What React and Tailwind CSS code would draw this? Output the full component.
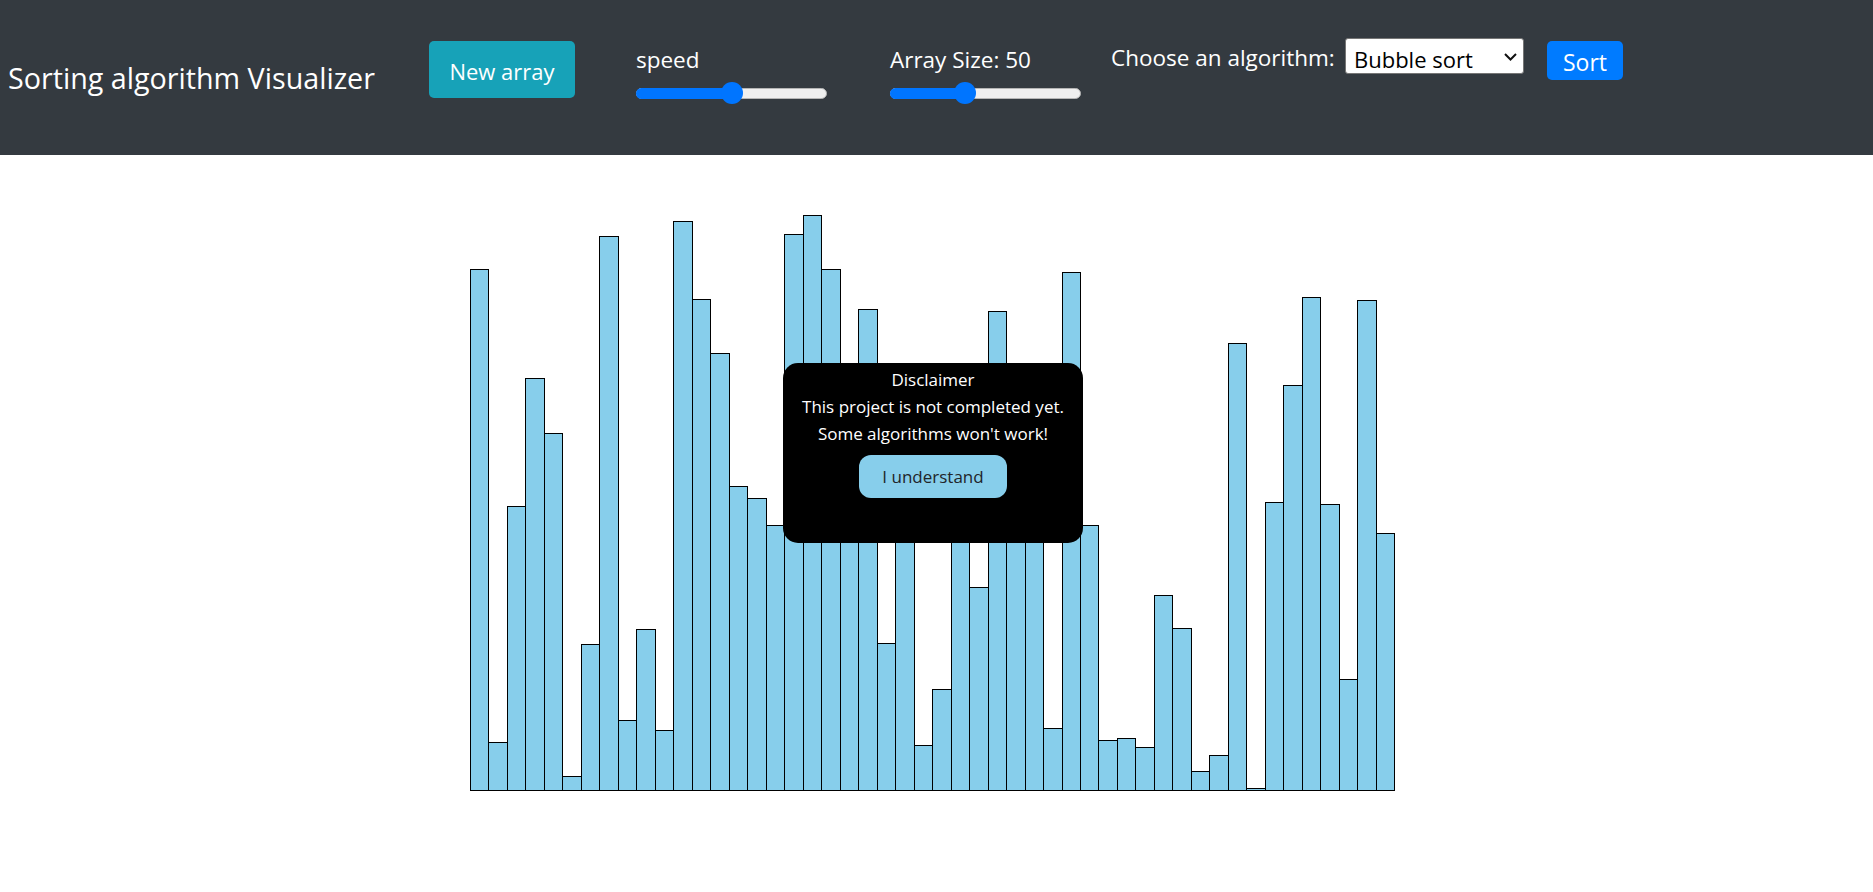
import React from "react";

const BAR_HEIGHTS = [
  522, 49, 285, 413, 358, 15, 147, 555, 71, 162,
  61, 570, 492, 438, 305, 293, 266, 557, 576, 522,
  341, 482, 148, 271, 46, 102, 391, 204, 480, 321,
  361, 63, 519, 266, 51, 53, 44, 196, 163, 20,
  36, 448, 3, 289, 406, 494, 287, 112, 491, 258,
];

function Slider({ thumbLeft }) {
  return (
    <div className="relative w-[191px] h-[22px] flex items-center">
      <div className="w-full h-[11px] rounded-full bg-[#efefef] border border-[#b5b5b5]" />
      <div
        className="absolute left-0 top-[5.5px] h-[11px] rounded-full bg-[#0075ff]"
        style={{ width: thumbLeft + 11 }}
      />
      <div
        className="absolute top-0 w-[22px] h-[22px] rounded-full bg-[#0075ff]"
        style={{ left: thumbLeft }}
      />
    </div>
  );
}

export default function App() {
  return (
    <div
      className="relative min-h-screen bg-white"
      style={{ fontFamily: '"Open Sans", "Noto Sans", sans-serif' }}
    >
      <nav className="h-[155px] bg-[#343a40] flex items-start text-white">
        <div className="w-[429px] pl-[8px] mt-[58px] text-[28.7px] leading-[40px] whitespace-nowrap">
          Sorting algorithm Visualizer
        </div>
        <button className="mt-[41px] w-[146px] h-[57px] rounded-[5px] bg-[#17a2b8] text-white text-[22px] pt-[4px] leading-[53px] whitespace-nowrap">
          New array
        </button>
        <div className="ml-[61px] mt-[45px] w-[191px] flex flex-col">
          <div className="text-[22.5px] leading-[30px] whitespace-nowrap">speed</div>
          <div className="mt-[7px]">
            <Slider thumbLeft={85} />
          </div>
        </div>
        <div className="ml-[63px] mt-[45px] w-[191px] flex flex-col">
          <div className="text-[22.5px] leading-[30px] whitespace-nowrap">Array Size: 50</div>
          <div className="mt-[7px]">
            <Slider thumbLeft={64} />
          </div>
        </div>
        <div className="ml-[30px] flex items-start">
          <div className="w-[234px] mt-[43px] text-[22.5px] leading-[30px] whitespace-nowrap">
            Choose an algorithm:
          </div>
          <div className="relative mt-[38px] w-[179px] h-[36px]">
            <select
              defaultValue="bubble"
              className="appearance-none w-full h-full bg-white text-black border border-[#767676] rounded-[3px] pl-[8px] pt-[4px] text-[22px] outline-none"
              style={{ fontFamily: '"Open Sans", "Noto Sans", sans-serif' }}
            >
              <option value="bubble">Bubble sort</option>
              <option value="selection">Selection sort</option>
              <option value="insertion">Insertion sort</option>
              <option value="merge">Merge sort</option>
              <option value="quick">Quick sort</option>
            </select>
            <svg
              className="absolute right-[7px] top-[15px] pointer-events-none"
              width="13"
              height="8"
              viewBox="0 0 13 8"
              fill="none"
            >
              <path d="M1 1L6.5 6.5L12 1" stroke="#111" strokeWidth="2" />
            </svg>
          </div>
          <button className="ml-[23px] mt-[41px] w-[76px] h-[39px] rounded-[5px] bg-[#007bff] text-white text-[23px] pt-[3px] leading-[36px]">
            Sort
          </button>
        </div>
      </nav>

      <div className="h-[636px] pl-[470px] flex items-end">
        <div className="w-[925px] h-full flex items-end">
          {BAR_HEIGHTS.map((h, i) => (
            <div
              key={i}
              className="flex-1 -ml-px first:ml-0 border border-black bg-[#87ceeb]"
              style={{ height: h }}
            />
          ))}
        </div>
      </div>

      <div className="absolute left-[783px] top-[363px] w-[300px] h-[180px] bg-black rounded-[15px] text-white text-center text-[17px] leading-[27px] pt-[3px] flex flex-col items-center">
        <div>Disclaimer</div>
        <div>This project is not completed yet.</div>
        <div>Some algorithms won't work!</div>
        <button className="mt-[8px] w-[148px] h-[43px] rounded-[12px] bg-[#87ceeb] text-[#212529] text-[17px] leading-[43px]">
          I understand
        </button>
      </div>
    </div>
  );
}
